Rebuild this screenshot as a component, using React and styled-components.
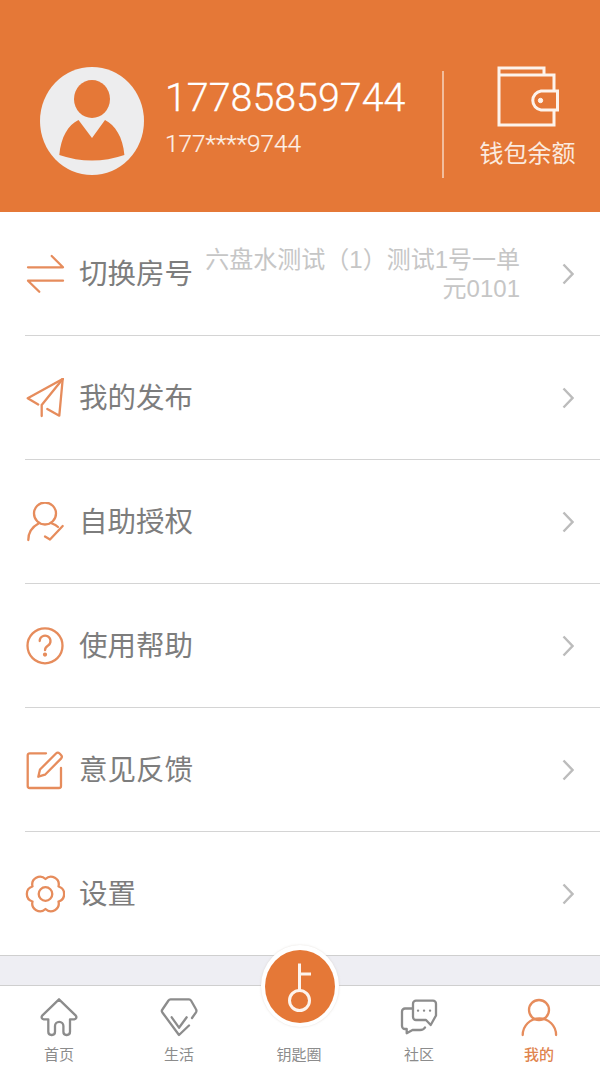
import React from 'react';
import styled, { createGlobalStyle } from 'styled-components';

const ORANGE = '#e57837';
const LINE = '#e68c5c';
const GRAY = '#8c8c8c';
const FONT = '"Liberation Sans", "Noto Sans CJK SC", sans-serif';

const Global = createGlobalStyle`
  html, body { margin: 0; padding: 0; background: #fff; }
  body { font-family: ${FONT}; }
  * { box-sizing: border-box; }
`;

const Page = styled.div`
  width: 600px;
  height: 1067px;
  overflow: hidden;
  position: relative;
  display: flex;
  flex-direction: column;
  background: #fff;
`;

const Header = styled.header`
  height: 212px;
  flex: none;
  background: ${ORANGE};
  display: flex;
  align-items: flex-start;
  padding: 67px 0 0 40px;
  color: #fff;
`;
const Avatar = styled.svg`
  width: 104px;
  height: 108px;
  flex: none;
  display: block;
`;
const Info = styled.div`
  width: 277px;
  margin-left: 21px;
  padding-top: 6px;
`;
const Phone = styled.div`
  font-family: Roboto, sans-serif;
  font-weight: 300;
  font-size: 39.4px;
  line-height: 50px;
  color: #fff;
  -webkit-text-stroke: 0.3px #fff;
`;
const Masked = styled.div`
  font-size: 24.4px;
  line-height: 32px;
  margin-top: 5px;
  font-family: Roboto, sans-serif;
  font-weight: 300;
  color: #fdf1e8;
  -webkit-text-stroke: 0.2px #fdf1e8;
`;
const Rule = styled.div`
  width: 2px;
  height: 107px;
  margin-top: 4px;
  flex: none;
  background: #f2bd9c;
`;
const Wallet = styled.div`
  flex: 1;
  display: flex;
  flex-direction: column;
  align-items: center;
  margin-top: -3px;
  padding-left: 11px;
`;
const WalletIcon = styled.svg`
  width: 64px;
  height: 64px;
  display: block;
`;
const WalletLabel = styled.div`
  font-size: 24px;
  line-height: 34px;
  margin-top: 9px;
  color: #fbeadf;
`;

const List = styled.main`
  flex: none;
`;
const Row = styled.div`
  height: ${p => (p.$last ? 123 : 124)}px;
  margin-left: 25px;
  padding-right: 26px;
  display: flex;
  align-items: center;
  border-bottom: ${p => (p.$last ? 'none' : '1px solid #d4d4d4')};
`;
const RowIcon = styled.svg`
  width: 40px;
  height: 40px;
  flex: none;
  display: block;
  fill: none;
  stroke: ${LINE};
  stroke-width: 2.3;
  stroke-linecap: round;
  stroke-linejoin: round;
`;
const RowLabel = styled.div`
  margin-left: 14px;
  font-size: 28.5px;
  line-height: 40px;
  white-space: nowrap;
  color: #7d7d7d;
`;
const RowValue = styled.div`
  flex: 1;
  margin-left: 11px;
  text-align: right;
  font-size: 24px;
  line-height: 29px;
  color: #c6c6c6;
`;
const Chevron = styled.svg`
  width: 12px;
  height: 22px;
  margin-left: 42px;
  flex: none;
  display: block;
  fill: none;
  stroke: #bcbcbc;
  stroke-width: 2.4;
`;

const Band = styled.div`
  height: 31px;
  flex: none;
  background: #eeeef3;
  border-top: 1px solid #cfcfcf;
  border-bottom: 1px solid #cfcfcf;
`;

const TabBar = styled.nav`
  flex: 1;
  display: grid;
  grid-template-columns: repeat(5, 120px);
  background: #fff;
`;
const Tab = styled.div`
  display: flex;
  flex-direction: column;
  align-items: center;
  padding-top: 11px;
  margin-left: -2px;
`;
const TabIcon = styled.svg`
  width: 40px;
  height: 40px;
  flex: none;
  display: block;
  fill: none;
  stroke: ${p => (p.$active ? LINE : GRAY)};
  stroke-width: 2.3;
  stroke-linecap: round;
  stroke-linejoin: round;
`;
const TabSpacer = styled.div`
  height: 40px;
  flex: none;
`;
const TabLabel = styled.div`
  margin-top: 9px;
  font-size: 15px;
  line-height: 18px;
  font-weight: ${p => (p.$active ? 500 : 400)};
  color: ${p => (p.$active ? '#e0854f' : GRAY)};
`;
const KeyButton = styled.div`
  position: absolute;
  left: 261px;
  top: 945px;
  width: 78px;
  height: 82px;
  border-radius: 50%;
  background: #fff;
  box-shadow: 0 0 2px rgba(200, 190, 180, 0.5);
  display: flex;
  align-items: center;
  justify-content: center;
`;
const KeyDisc = styled.svg`
  width: 70px;
  height: 73px;
  display: block;
`;

const gearPath = (() => {
  const cx = 20.5, cy = 20, rv = 15;
  const pt = a => {
    const r = (a * Math.PI) / 180;
    return `${(cx + rv * Math.cos(r)).toFixed(2)} ${(cy + rv * Math.sin(r)).toFixed(2)}`;
  };
  let d = `M${pt(-30)}`;
  for (let i = 0; i < 6; i++) {
    d += ` A7.8 7.8 0 0 1 ${pt(-30 + (i + 1) * 60)}`;
  }
  return d + 'Z';
})();

const icons = {
  swap: (
    <>
      <path d="M3 13.3H38L26.7 2" />
      <path d="M38 26.7H3L14.3 37.7" />
    </>
  ),
  plane: (
    <>
      <path d="M37.7 1L2.7 20.3L13.2 26.5" />
      <path d="M37.7 1L16.7 27V38" />
      <path d="M37.7 1L34.3 37.7L22.3 31" />
    </>
  ),
  person: (
    <>
      <circle cx="20" cy="11.5" r="11" />
      <path d="M3.3 38C3.3 30 7 25 13.5 21.5" />
      <path d="M27 21.5C30 22.5 32 24 33 25" />
      <path d="M20 34.5L25 37.5L37.7 24" />
    </>
  ),
  help: (
    <>
      <circle cx="20" cy="19.8" r="17.5" />
      <path d="M14.7 15a5.4 5.4 0 1 1 8.4 4.5c-2.1 1.4-3.1 2.4-3.1 4.7" />
      <circle cx="20" cy="28.6" r="1" />
    </>
  ),
  edit: (
    <>
      <path d="M21 3.3H4.7a2 2 0 0 0-2 2V36a2 2 0 0 0 2 2H34a2 2 0 0 0 2-2V18" />
      <path d="M13.3 26.7L15 19.5L31 3.5a2.6 2.6 0 0 1 3.6 0L36 5a2.6 2.6 0 0 1 0 3.6L20 24.7Z" />
    </>
  ),
  gear: (
    <>
      <path d={gearPath} />
      <circle cx="20.5" cy="20" r="6.8" />
    </>
  ),
};

const rows = [
  { icon: 'swap', label: '切换房号', value: '六盘水测试（1）测试1号一单元0101' },
  { icon: 'plane', label: '我的发布' },
  { icon: 'person', label: '自助授权' },
  { icon: 'help', label: '使用帮助' },
  { icon: 'edit', label: '意见反馈' },
  { icon: 'gear', label: '设置' },
];

const tabs = [
  {
    label: '首页',
    icon: <path d="M20 2.3L3.2 18.6c-1.2 1.6-.4 3.4 1.6 3.7H9.3V34.8c0 2 1.2 3.2 3.2 3.2h.5c2 0 3-1.2 3-3.2V29a4.2 4.2 0 0 1 8.4 0v5.8c0 2 1 3.2 3 3.2h.5c2 0 3.1-1.2 3.1-3.2V22.3h4.2c2-.3 2.8-2.1 1.6-3.7Z" />,
  },
  {
    label: '生活',
    icon: (
      <>
        <path d="M30 28.5L20 38L3.4 15.5c-.8-1-.8-2 0-3L9.5 3.5c.5-.8 1-1.2 2-1.2H30c1 0 1.5.4 2 1.2l5 8.8c.6 1 .6 2 0 3L33 21" />
        <path d="M12.7 20.3L20 30.7L27.7 20.3" />
      </>
    ),
  },
  { label: '钥匙圈', icon: null },
  {
    label: '社区',
    icon: (
      <>
        <path d="M17 3.7H34a3 3 0 0 1 3 3V18.5L31.7 28L27 23H17a3 3 0 0 1-3-3V6.7a3 3 0 0 1 3-3Z" />
        <path d="M13 11.5H6a3 3 0 0 0-3 3V29a3 3 0 0 0 3 3h1.7v4.3L13.5 33H21c2.5 0 4-.7 5-2.5" />
        <path d="M19 13.7h.1M25 13.7h.1M31 13.7h.1" />
      </>
    ),
  },
  {
    label: '我的',
    active: true,
    icon: (
      <>
        <circle cx="20" cy="13" r="10" />
        <path d="M3.7 38a16.6 16.6 0 0 1 33.4 0" />
      </>
    ),
  },
];

export default function App() {
  return (
    <Page lang="zh-CN">
      <Global />
      <Header>
        <Avatar viewBox="0 0 104 108">
          <ellipse cx="52" cy="54" rx="52" ry="54" fill="#ededee" />
          <ellipse cx="52" cy="32" rx="18" ry="19" fill={ORANGE} />
          <path d="M19.3 88C21 70 28 58 38.5 53L52 71L65 53C75 58 83 70 84.4 88Q52 99 19.3 88Z" fill={ORANGE} />
        </Avatar>
        <Info>
          <Phone>17785859744</Phone>
          <Masked>177****9744</Masked>
        </Info>
        <Rule />
        <Wallet>
          <WalletIcon viewBox="0 0 64 64" fill="none" stroke="#fdf3ec" strokeWidth="3">
            <path d="M3 11H58V27M58 46V61H3V4H48V11" />
            <path d="M61.5 27H45a9.6 9.6 0 0 0 0 19H61.5Z" />
            <circle cx="44.5" cy="36.5" r="2.2" fill="#fdf3ec" strokeWidth="1" />
          </WalletIcon>
          <WalletLabel>钱包余额</WalletLabel>
        </Wallet>
      </Header>

      <List>
        {rows.map((r, i) => (
          <Row key={r.label} $last={i === rows.length - 1}>
            <RowIcon viewBox="0 0 40 40">{icons[r.icon]}</RowIcon>
            <RowLabel>{r.label}</RowLabel>
            <RowValue>{r.value}</RowValue>
            <Chevron viewBox="0 0 12 22">
              <path d="M1.5 1.5L10.5 11L1.5 20.5" />
            </Chevron>
          </Row>
        ))}
      </List>

      <Band />

      <TabBar>
        {tabs.map(t => (
          <Tab key={t.label}>
            {t.icon ? (
              <TabIcon viewBox="0 0 40 40" $active={t.active}>{t.icon}</TabIcon>
            ) : (
              <TabSpacer />
            )}
            <TabLabel $active={t.active}>{t.label}</TabLabel>
          </Tab>
        ))}
      </TabBar>

      <KeyButton>
        <KeyDisc viewBox="0 0 70 73">
          <ellipse cx="35" cy="36.5" rx="35" ry="36.5" fill={ORANGE} />
          <g fill="none" stroke="#fdf3ec" strokeWidth="3">
            <circle cx="34.5" cy="50.5" r="10" />
            <path d="M34.5 40.5V13.5M34.5 24H46" />
          </g>
        </KeyDisc>
      </KeyButton>
    </Page>
  );
}
